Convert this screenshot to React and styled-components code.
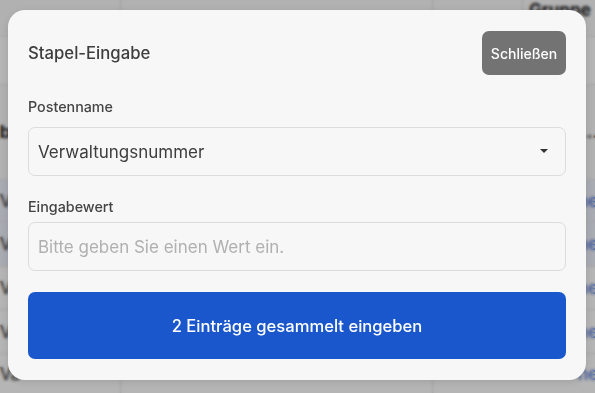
import styled, { createGlobalStyle } from "styled-components";

const GlobalStyle = createGlobalStyle`
  html, body {
    margin: 0;
    padding: 0;
    width: 595px;
    height: 393px;
    overflow: hidden;
    font-family: Inter, "Noto Sans", sans-serif;
  }
`;

// background page (table behind the dialog)
const Page = styled.div`
  width: 595px;
  height: 393px;
  overflow: hidden;
  background: #fff;
`;

const Table = styled.div`
  margin-left: -6px;
  width: 610px;
`;

const Row = styled.div`
  display: grid;
  grid-template-columns: 127px 312px 90px 81px;
  height: ${(p) => p.h}px;
  background: ${(p) => (p.selected ? "#eef1fb" : p.head ? "#fafafa" : "#fff")};
  border-bottom: 1px solid #e6e6e6;
`;

const Cell = styled.div`
  display: flex;
  align-items: ${(p) => p.align || "center"};
  padding: 0 6px;
  border-right: ${(p) => (p.line ? "1px solid #e0e0e0" : "none")};
  font-size: 17px;
  font-weight: ${(p) => (p.bold ? 700 : 400)};
  color: ${(p) => (p.link ? "#2f5fd0" : "#222")};
  overflow: hidden;
  white-space: nowrap;
  justify-content: ${(p) => (p.end ? "flex-end" : "flex-start")};
`;

const Overlay = styled.div`
  position: fixed;
  inset: 0;
  background: rgba(0, 0, 0, 0.29);
  backdrop-filter: blur(1.6px);
  display: flex;
  align-items: flex-start;
  justify-content: flex-start;
  padding: 10px 0 0 8px;
`;

const Dialog = styled.div`
  width: 578px;
  height: 370px;
  box-sizing: border-box;
  background: #f7f7f7;
  border-radius: 17px;
  padding: 21px 20px 21px 20px;
  box-shadow: 0 2px 8px rgba(0, 0, 0, 0.12);
  display: flex;
  flex-direction: column;
`;

const Head = styled.div`
  display: flex;
  align-items: center;
  justify-content: space-between;
  height: 44px;
`;

const Title = styled.h2`
  margin: 0;
  font-size: 16.7px;
  font-weight: 500;
  color: #3d3d3d;
`;

const CloseButton = styled.button`
  width: 84px;
  height: 44px;
  border: none;
  border-radius: 7px;
  background: #737373;
  color: #fff;
  font-family: inherit;
  font-size: 14px;
  font-weight: 500;
  padding: 0;
`;

const Field = styled.div`
  display: flex;
  flex-direction: column;
  margin-top: ${(p) => p.mt}px;
`;

const Label = styled.label`
  font-size: 14.3px;
  font-weight: 500;
  color: #444;
  line-height: 17px;
  margin-bottom: ${(p) => p.mb}px;
`;

const Box = styled.div`
  height: 49px;
  box-sizing: border-box;
  border: 1px solid #dcdcdc;
  border-radius: 7px;
  background: #f7f7f7;
  display: flex;
  align-items: center;
  justify-content: space-between;
  padding: 0 17px 0 9px;
  font-size: 17px;
  color: ${(p) => (p.placeholder ? "#b0b0b0" : "#3d3d3d")};
`;

const Caret = styled.span`
  width: 0;
  height: 0;
  border-left: 4px solid transparent;
  border-right: 4px solid transparent;
  border-top: 4px solid #333;
  margin-top: -2px;
`;

const SubmitButton = styled.button`
  margin-top: 21px;
  height: 67px;
  border: none;
  border-radius: 7px;
  background: #1b57cc;
  color: #fff;
  font-family: inherit;
  font-size: 16.6px;
  font-weight: 500;
`;

const rows = [
  { h: 36, head: true, cells: ["", "", "", "Gruppe"], align: "flex-start", bold: true },
  { h: 47, cells: ["", "", "", ""] },
  { h: 94, head: true, cells: ["b", "", "", "…"], bold: true },
  { h: 41, cells: ["V", "", "", "ne"] },
  { h: 44, selected: true, cells: ["V", "", "", "ne"] },
  { h: 42, cells: ["V", "", "", "ne"] },
  { h: 43, cells: ["V", "", "", "ne"] },
  { h: 40, cells: ["Va", "", "", "ne"] },
  { h: 40, cells: ["", "", "", ""] },
];

export default function App() {
  return (
    <>
      <GlobalStyle />
      <Page>
        <Table>
          {rows.map((r, i) => (
            <Row key={i} h={r.h} head={r.head} selected={r.selected || i === 3}>
              <Cell line bold={r.bold}>{r.cells[0]}</Cell>
              <Cell line>{r.cells[1]}</Cell>
              <Cell line={r.head && i === 0} />
              <Cell
                bold={r.bold}
                link={!r.bold}
                align={r.align}
                end={r.cells[3] === "ne" || r.cells[3] === "…"}
              >
                {r.cells[3]}
              </Cell>
            </Row>
          ))}
        </Table>
      </Page>
      <Overlay>
        <Dialog>
          <Head>
            <Title>Stapel-Eingabe</Title>
            <CloseButton>Schließen</CloseButton>
          </Head>
          <Field mt={23}>
            <Label mb={12}>Postenname</Label>
            <Box>
              <span>Verwaltungsnummer</span>
              <Caret />
            </Box>
          </Field>
          <Field mt={22}>
            <Label mb={7}>Eingabewert</Label>
            <Box placeholder>Bitte geben Sie einen Wert ein.</Box>
          </Field>
          <SubmitButton>2 Einträge gesammelt eingeben</SubmitButton>
        </Dialog>
      </Overlay>
    </>
  );
}
